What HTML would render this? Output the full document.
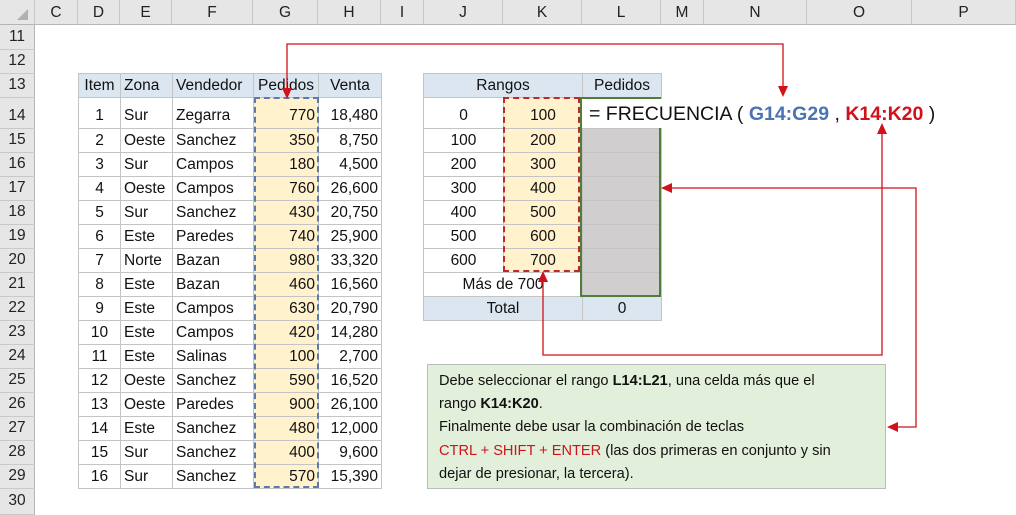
<!DOCTYPE html>
<html><head><meta charset="utf-8"><style>
*{margin:0;padding:0;box-sizing:border-box}
body{width:1016px;height:513px;background:#fff;position:relative;overflow:hidden;font-family:"Liberation Sans",sans-serif;font-size:15.5px;color:#111}
.ch{position:absolute;top:0;height:25px;background:#e6e6e6;border-right:1px solid #c6c6c6;border-bottom:1px solid #b5b5b5;text-align:center;line-height:25px;font-size:15.5px;color:#222}
table{position:absolute;border-collapse:collapse;table-layout:fixed}
td{border:1px solid #c4c4c4;padding:0 3px;white-space:nowrap;overflow:hidden}
.rh td{background:#e6e6e6;border:none;border-bottom:1px solid #c9c9c9;border-right:1px solid #b5b5b5;text-align:center;color:#222}
.hd td{background:#dce6f1}
.c{text-align:center}.r{text-align:right}
.y{background:#fff2cc}
.g{background:#d0cece}
.t14 td{vertical-align:bottom;padding-bottom:3px}
</style></head><body>
<div class="ch" style="left:0;width:35px"><svg width="35" height="25"><polygon points="28,9 28,20 17,20" fill="#b0b0b0"/></svg></div>
<div class="ch" style="left:35px;width:43px">C</div>
<div class="ch" style="left:78px;width:42px">D</div>
<div class="ch" style="left:120px;width:52px">E</div>
<div class="ch" style="left:172px;width:81px">F</div>
<div class="ch" style="left:253px;width:65px">G</div>
<div class="ch" style="left:318px;width:63px">H</div>
<div class="ch" style="left:381px;width:43px">I</div>
<div class="ch" style="left:424px;width:79px">J</div>
<div class="ch" style="left:503px;width:79px">K</div>
<div class="ch" style="left:582px;width:79px">L</div>
<div class="ch" style="left:661px;width:43px">M</div>
<div class="ch" style="left:704px;width:103px">N</div>
<div class="ch" style="left:807px;width:105px">O</div>
<div class="ch" style="left:912px;width:104px">P</div>

<table class="rh" style="left:0;top:25px;width:35px">
<tr style="height:24px"><td>11</td></tr><tr style="height:24px"><td>12</td></tr><tr style="height:24px"><td>13</td></tr><tr class="t14" style="height:31px"><td>14</td></tr>
<tr style="height:24px"><td>15</td></tr><tr style="height:24px"><td>16</td></tr><tr style="height:24px"><td>17</td></tr><tr style="height:24px"><td>18</td></tr><tr style="height:24px"><td>19</td></tr><tr style="height:24px"><td>20</td></tr><tr style="height:24px"><td>21</td></tr><tr style="height:24px"><td>22</td></tr><tr style="height:24px"><td>23</td></tr><tr style="height:24px"><td>24</td></tr><tr style="height:24px"><td>25</td></tr><tr style="height:24px"><td>26</td></tr><tr style="height:24px"><td>27</td></tr><tr style="height:24px"><td>28</td></tr><tr style="height:24px"><td>29</td></tr><tr style="height:26px"><td>30</td></tr>
</table>

<table style="left:78px;top:73px;width:303px">
<colgroup><col style="width:42px"><col style="width:52px"><col style="width:81px"><col style="width:65px"><col style="width:63px"></colgroup>
<tr class="hd" style="height:24px"><td class="c">Item</td><td>Zona</td><td>Vendedor</td><td class="c">Pedidos</td><td class="c">Venta</td></tr>
<tr class="t14" style="height:31px"><td class="c">1</td><td>Sur</td><td>Zegarra</td><td class="r y">770</td><td class="r">18,480</td></tr>
<tr style="height:24px"><td class="c">2</td><td>Oeste</td><td>Sanchez</td><td class="r y">350</td><td class="r">8,750</td></tr>
<tr style="height:24px"><td class="c">3</td><td>Sur</td><td>Campos</td><td class="r y">180</td><td class="r">4,500</td></tr>
<tr style="height:24px"><td class="c">4</td><td>Oeste</td><td>Campos</td><td class="r y">760</td><td class="r">26,600</td></tr>
<tr style="height:24px"><td class="c">5</td><td>Sur</td><td>Sanchez</td><td class="r y">430</td><td class="r">20,750</td></tr>
<tr style="height:24px"><td class="c">6</td><td>Este</td><td>Paredes</td><td class="r y">740</td><td class="r">25,900</td></tr>
<tr style="height:24px"><td class="c">7</td><td>Norte</td><td>Bazan</td><td class="r y">980</td><td class="r">33,320</td></tr>
<tr style="height:24px"><td class="c">8</td><td>Este</td><td>Bazan</td><td class="r y">460</td><td class="r">16,560</td></tr>
<tr style="height:24px"><td class="c">9</td><td>Este</td><td>Campos</td><td class="r y">630</td><td class="r">20,790</td></tr>
<tr style="height:24px"><td class="c">10</td><td>Este</td><td>Campos</td><td class="r y">420</td><td class="r">14,280</td></tr>
<tr style="height:24px"><td class="c">11</td><td>Este</td><td>Salinas</td><td class="r y">100</td><td class="r">2,700</td></tr>
<tr style="height:24px"><td class="c">12</td><td>Oeste</td><td>Sanchez</td><td class="r y">590</td><td class="r">16,520</td></tr>
<tr style="height:24px"><td class="c">13</td><td>Oeste</td><td>Paredes</td><td class="r y">900</td><td class="r">26,100</td></tr>
<tr style="height:24px"><td class="c">14</td><td>Este</td><td>Sanchez</td><td class="r y">480</td><td class="r">12,000</td></tr>
<tr style="height:24px"><td class="c">15</td><td>Sur</td><td>Sanchez</td><td class="r y">400</td><td class="r">9,600</td></tr>
<tr style="height:24px"><td class="c">16</td><td>Sur</td><td>Sanchez</td><td class="r y">570</td><td class="r">15,390</td></tr>
</table>
<div style="position:absolute;left:254px;top:97px;width:65px;height:391px;border:2px dashed #5a7bab"></div>

<table style="left:423px;top:73px;width:238px">
<colgroup><col style="width:80px"><col style="width:79px"><col style="width:79px"></colgroup>
<tr class="hd" style="height:24px"><td class="c" colspan="2">Rangos</td><td class="c">Pedidos</td></tr>
<tr class="t14" style="height:31px"><td class="c">0</td><td class="c y">100</td><td style="background:#fff"></td></tr>
<tr style="height:24px"><td class="c">100</td><td class="c y">200</td><td class="g"></td></tr>
<tr style="height:24px"><td class="c">200</td><td class="c y">300</td><td class="g"></td></tr>
<tr style="height:24px"><td class="c">300</td><td class="c y">400</td><td class="g"></td></tr>
<tr style="height:24px"><td class="c">400</td><td class="c y">500</td><td class="g"></td></tr>
<tr style="height:24px"><td class="c">500</td><td class="c y">600</td><td class="g"></td></tr>
<tr style="height:24px"><td class="c">600</td><td class="c y">700</td><td class="g"></td></tr>
<tr style="height:24px"><td class="c" colspan="2">Más de 700</td><td class="g"></td></tr>
<tr class="hd" style="height:24px"><td class="c" colspan="2">Total</td><td class="c">0</td></tr>
</table>
<div style="position:absolute;left:503px;top:97px;width:77px;height:175px;border:2px dashed #c0282d"></div>
<div style="position:absolute;left:580px;top:97px;width:81px;height:200px;border:2px solid #507e3a"></div>
<div style="position:absolute;left:582px;top:99px;width:360px;height:29px;background:#fff;font-size:19.5px;line-height:31px;padding-left:7px;white-space:nowrap;color:#111">= FRECUENCIA ( <b style="color:#4a74b4">G14:G29</b> , <b style="color:#d0121b">K14:K20</b> )</div>

<div style="position:absolute;left:427px;top:364px;width:459px;height:125px;background:#e2efda;border:1px solid #bcbcbc;padding:5px 0 0 11px;font-size:14.6px;line-height:23.2px;color:#111;white-space:nowrap">Debe seleccionar el rango <b>L14:L21</b>, una celda más que el<br>rango <b>K14:K20</b>.<br>Finalmente debe usar la combinación de teclas<br><span style="color:#d0121b">CTRL + SHIFT + ENTER</span> (las dos primeras en conjunto y sin<br>dejar de presionar, la tercera).</div>

<svg style="position:absolute;left:0;top:0" width="1016" height="513">
<g fill="none" stroke="#d0121b" stroke-width="1.3">
<polyline points="287,90 287,44 783,44 783,88"/>
<polyline points="882,132 882,355 543,355 543,280"/>
<polyline points="670,188 916,188 916,427 896,427"/>
</g>
<g fill="#d0121b">
<polygon points="282,88 292,88 287,99"/>
<polygon points="778,86 788,86 783,97"/>
<polygon points="877,134 887,134 882,123"/>
<polygon points="538,282 548,282 543,271"/>
<polygon points="672,183 672,193 661,188"/>
<polygon points="898,422 898,432 887,427"/>
</g>
</svg>
</body></html>
